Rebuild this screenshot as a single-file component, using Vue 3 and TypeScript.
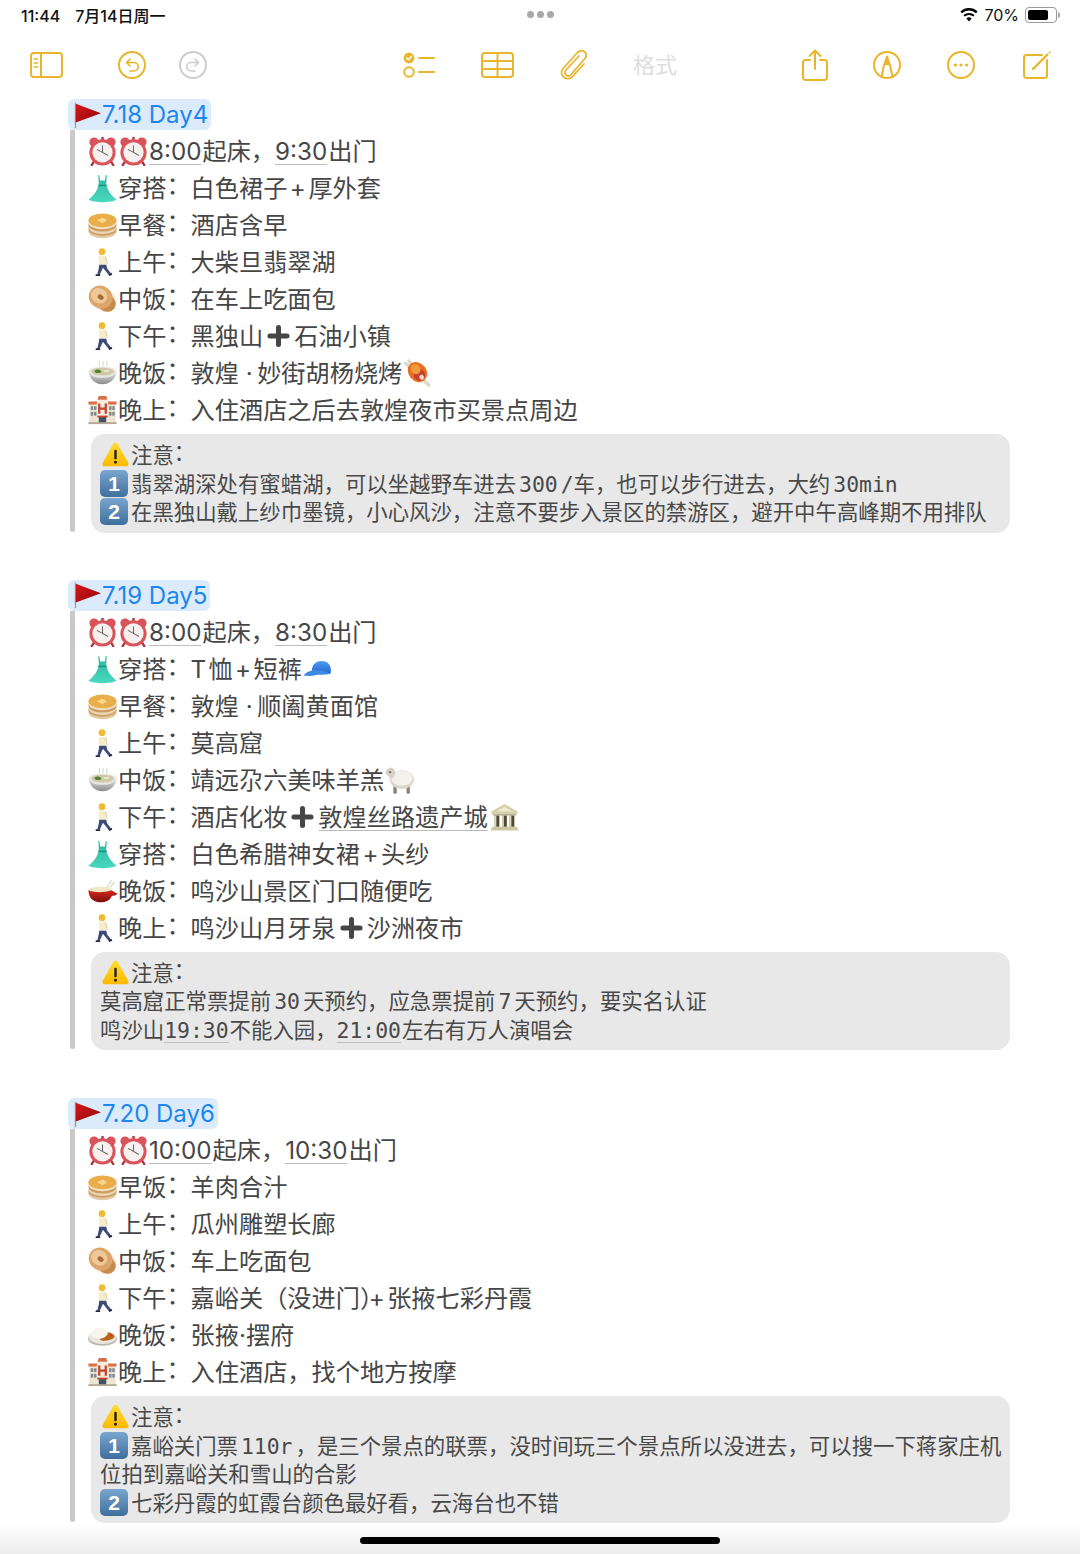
<script setup lang="ts">
type Seg = { k: 't' | 'u' | 'e' | 'c' | 'key' | 'm' | 'trim'; v: string }

const u = (v: string): Seg => ({ k: 'u', v })
const e = (v: string): Seg => ({ k: 'e', v })
const m = (v: string): Seg => ({ k: 'm', v })
const key = (v: string): Seg => ({ k: 'key', v })
const colon: Seg = { k: 'c', v: '：' }
const toSegs = (parts: (string | Seg)[]): Seg[] =>
  parts.map((p) => (typeof p === 'string' ? { k: 't', v: p } : p))

// icon + label + full-width colon + value
const row = (icon: string, label: string, ...value: (string | Seg)[]): Seg[] => [
  e(icon),
  { k: 't', v: label },
  colon,
  ...toSegs(value),
]

const days = [
  {
    title: '7.18 Day4',
    lines: [
      toSegs([e('clock'), e('clock'), u('8:00'), '起床，', u('9:30'), '出门']),
      row('dress', '穿搭', '白色裙子', m('+'), '厚外套'),
      row('pancake', '早餐', '酒店含早'),
      row('walk', '上午', '大柴旦翡翠湖'),
      row('bagel', '中饭', '在车上吃面包'),
      row('walk', '下午', '黑独山', e('plus'), '石油小镇'),
      row('bowl', '晚饭', '敦煌 ·\u2009妙街胡杨烧烤', e('meat')),
      row('hotel', '晚上', '入住酒店之后去敦煌夜市买景点周边'),
    ],
    notes: [
      toSegs([e('warn'), '注意', colon]),
      toSegs([key('1'), '翡翠湖深处有蜜蜡湖，可以坐越野车进去', m('300'), '/车，也可以步行进去，大约', m('30min')]),
      toSegs([key('2'), '在黑独山戴上纱巾墨镜，小心风沙，注意不要步入景区的禁游区，避开中午高峰期不用排队']),
    ],
  },
  {
    title: '7.19 Day5',
    lines: [
      toSegs([e('clock'), e('clock'), u('8:00'), '起床，', u('8:30'), '出门']),
      row('dress', '穿搭', 'T\u200a恤', m('+'), '短裤', e('cap')),
      row('pancake', '早餐', '敦煌 ·\u2009顺阖黄面馆'),
      row('walk', '上午', '莫高窟'),
      row('bowl', '中饭', '靖远尕六美味羊羔', e('sheep')),
      row('walk', '下午', '酒店化妆', e('plus'), u('敦煌丝路遗产城'), e('temple')),
      row('dress', '穿搭', '白色希腊神女裙', m('+'), '头纱'),
      row('pot', '晚饭', '鸣沙山景区门口随便吃'),
      row('walk', '晚上', '鸣沙山月牙泉', e('plus'), '沙洲夜市'),
    ],
    notes: [
      toSegs([e('warn'), '注意', colon]),
      toSegs(['莫高窟正常票提前', m('30'), '天预约，应急票提前', m('7'), '天预约，要实名认证']),
      toSegs(['鸣沙山', u('19:30'), '不能入园，', u('21:00'), '左右有万人演唱会']),
    ],
  },
  {
    title: '7.20 Day6',
    lines: [
      toSegs([e('clock'), e('clock'), u('10:00'), '起床，', u('10:30'), '出门']),
      row('pancake', '早饭', '羊肉合汁'),
      row('walk', '上午', '瓜州雕塑长廊'),
      row('bagel', '中饭', '车上吃面包'),
      row('walk', '下午', '嘉峪关（没进门', { k: 'trim', v: '）' }, m('+'), '张掖七彩丹霞'),
      row('curry', '晚饭', '张掖·摆府'),
      row('hotel', '晚上', '入住酒店，找个地方按摩'),
    ],
    notes: [
      toSegs([e('warn'), '注意', colon]),
      toSegs([key('1'), '嘉峪关门票', m('110r'), '，是三个景点的联票，没时间玩三个景点所以没进去，可以搜一下蒋家庄机位拍到嘉峪关和雪山的合影']),
      toSegs([key('2'), '七彩丹霞的虹霞台颜色最好看，云海台也不错']),
    ],
  },
]
</script>

<template>
  <div class="page">
    <!-- emoji sheet, referenced with <use> -->
    <svg class="sheet" aria-hidden="true">
      <defs>
        <linearGradient id="gFlag" x1="0" y1="0" x2="1" y2="1">
          <stop offset="0" stop-color="#d8161a" />
          <stop offset="1" stop-color="#8f0b0e" />
        </linearGradient>
        <linearGradient id="gDress" x1="0" y1="0" x2="0" y2="1">
          <stop offset="0" stop-color="#2bb5a0" />
          <stop offset="1" stop-color="#4ad8c0" />
        </linearGradient>
        <linearGradient id="gBowl" x1="0" y1="0" x2="0" y2="1">
          <stop offset="0" stop-color="#dcdcdc" />
          <stop offset="1" stop-color="#8c8c8c" />
        </linearGradient>
        <linearGradient id="gPot" x1="0" y1="0" x2="0" y2="1">
          <stop offset="0" stop-color="#d8281e" />
          <stop offset="1" stop-color="#7c0f0c" />
        </linearGradient>
        <linearGradient id="gCap" x1="0" y1="0" x2="0" y2="1">
          <stop offset="0" stop-color="#4c9cf0" />
          <stop offset="1" stop-color="#2468d0" />
        </linearGradient>
        <linearGradient id="gWarn" x1="0" y1="0" x2="0" y2="1">
          <stop offset="0" stop-color="#ffdd33" />
          <stop offset="1" stop-color="#fdb900" />
        </linearGradient>
      </defs>

      <symbol id="flag" viewBox="0 0 32 32">
        <rect x="3" y="3" width="1.4" height="27" fill="#9a9a9a" />
        <path d="M4 4 L31 14 L4 24 Z" fill="url(#gFlag)" />
      </symbol>

      <symbol id="clock" viewBox="0 0 32 32">
        <circle cx="7" cy="6.5" r="5" fill="#d8535a" />
        <circle cx="25" cy="6.5" r="5" fill="#d8535a" />
        <path d="M7 27 L4.5 31 M25 27 L27.5 31" stroke="#a8323a" stroke-width="2.4" stroke-linecap="round" />
        <rect x="14.6" y="1" width="2.8" height="4" fill="#b5494f" />
        <circle cx="16" cy="17.5" r="14" fill="#d9545b" />
        <circle cx="16" cy="17.5" r="10.8" fill="#f6f1ee" />
        <path d="M16 10.5 V17.5 L21.5 20.5 M16 17.5 L10.5 14.5" stroke="#6a6a6a" stroke-width="1.1" fill="none" stroke-linecap="round" />
      </symbol>

      <symbol id="dress" viewBox="0 0 32 32">
        <path d="M12.5 2 L13.5 8 L18.5 8 L19.5 2 L20.5 2 L20 10 L20.5 14 C22 20 27 25 31 28.5 C25 32 7 32 1 28.5 C5 25 10 20 11.5 14 L12 10 L11.5 2 Z" fill="url(#gDress)" />
        <rect x="11.6" y="12.6" width="8.8" height="1.4" fill="#1b8f7d" />
      </symbol>

      <symbol id="pancake" viewBox="0 0 32 32">
        <ellipse cx="16" cy="23" rx="15" ry="7" fill="#e3c9a2" />
        <ellipse cx="16" cy="20.5" rx="15" ry="7" fill="#c99d63" />
        <ellipse cx="16" cy="18.5" rx="15" ry="7" fill="#ecd8b6" />
        <ellipse cx="16" cy="16" rx="15" ry="7" fill="#cc9d5e" />
        <ellipse cx="16" cy="13.5" rx="15" ry="7" fill="#f0dfc2" />
        <ellipse cx="16" cy="11" rx="15" ry="7.4" fill="#e9ad4a" />
        <path d="M10 11 L16 8 L21 11 L16 14 Z" fill="#f7d88a" />
      </symbol>

      <symbol id="walk" viewBox="0 0 32 32">
        <circle cx="15.5" cy="5" r="3.6" fill="#f0bb34" />
        <path d="M11.5 9.5 H18.5 L20 19 H12.5 Z" fill="#f3eccd" />
        <path d="M18.5 10 L20.5 18 L21.5 18 L20 10 Z" fill="#e8c99a" />
        <path d="M12.5 19 H20 L21 23 L25 28 L22.5 29.5 L18 24 L16.5 22 L13 29.5 L10.5 29 L12 23 Z" fill="#3d4b78" />
        <path d="M9 29 H13.5 V31 H8.5 Z M22.5 29 L25.5 27.5 L26.5 29.5 L23 31 Z" fill="#23263c" />
      </symbol>

      <symbol id="bagel" viewBox="0 0 32 32">
        <ellipse cx="18.5" cy="18" rx="13" ry="11.5" fill="#f1e9da" transform="rotate(35 18.5 18)" />
        <ellipse cx="20" cy="20" rx="10.5" ry="9" fill="#c78c4c" transform="rotate(35 20 20)" />
        <ellipse cx="14" cy="14" rx="13" ry="12" fill="#dca66a" transform="rotate(35 14 14)" />
        <ellipse cx="12.5" cy="12.5" rx="9" ry="8" fill="#eec898" transform="rotate(35 12.5 12.5)" />
        <ellipse cx="14" cy="14" rx="3.4" ry="2.6" fill="#a86c34" transform="rotate(35 14 14)" />
      </symbol>

      <symbol id="bowl" viewBox="0 0 32 32">
        <path d="M13 9 C11 7 14 6 12.5 3 M17 9 C15 7 18 6 16.5 3 M21 9 C19 7 22 6 20.5 3" stroke="#cfcfcf" stroke-width="1" fill="none" />
        <ellipse cx="16" cy="15" rx="15" ry="6" fill="#e6e6e2" />
        <ellipse cx="16" cy="14.5" rx="12" ry="4.2" fill="#cfc9a8" />
        <path d="M7 14 C10 11 14 12 15 15 C12 17 9 16 7 14 Z" fill="#4e7f32" />
        <path d="M17 13 H24 L22 15 H18 Z" fill="#f1ead0" />
        <path d="M1 15.5 C3 22 7 28 16 28 C25 28 29 22 31 15.5 C27 20 22 21 16 21 C10 21 5 20 1 15.5 Z" fill="url(#gBowl)" />
      </symbol>

      <symbol id="meat" viewBox="0 0 32 32">
        <path d="M7 3 L11 9 M3 5.5 L8 9" stroke="#dfd7ca" stroke-width="3.2" stroke-linecap="round" />
        <path d="M21 22 L28 29" stroke="#dfd8cc" stroke-width="3.8" stroke-linecap="round" />
        <ellipse cx="16" cy="15" rx="9.5" ry="11.5" fill="#e5701f" transform="rotate(-40 16 15)" />
        <ellipse cx="18" cy="18" rx="6" ry="6.5" fill="#c5402c" transform="rotate(-40 18 18)" />
        <ellipse cx="14" cy="12" rx="5" ry="5.5" fill="#f19a3c" transform="rotate(-40 14 12)" />
        <ellipse cx="20.5" cy="20.5" rx="2.4" ry="2.8" fill="#f3d3c6" transform="rotate(-40 20.5 20.5)" />
      </symbol>

      <symbol id="hotel" viewBox="0 0 32 32">
        <path d="M2 10 L10 6 H22 L30 10 V30 H2 Z" fill="#efe3d2" />
        <path d="M1 7 H10 L12 1 H20 L22 7 H31 V10 H1 Z" fill="#d86f4a" />
        <rect x="10" y="5" width="12" height="25" fill="#f6ecdd" />
        <path d="M12.5 9 V20 M19.5 9 V20 M12.5 14.5 H19.5" stroke="#c2452f" stroke-width="2.4" fill="none" />
        <g fill="#7d8a93">
          <rect x="3.5" y="12" width="2.6" height="4" /><rect x="7" y="12" width="2.6" height="4" />
          <rect x="3.5" y="18" width="2.6" height="4" /><rect x="7" y="18" width="2.6" height="4" />
          <rect x="23" y="12" width="2.6" height="4" /><rect x="26.4" y="12" width="2.6" height="4" />
          <rect x="23" y="18" width="2.6" height="4" /><rect x="26.4" y="18" width="2.6" height="4" />
        </g>
        <rect x="12" y="23" width="8" height="7" fill="#3f5566" />
        <rect x="10.5" y="22" width="11" height="2" fill="#c2452f" />
        <rect x="1" y="29" width="30" height="2" fill="#b4a994" />
      </symbol>

      <symbol id="plus" viewBox="0 0 32 32">
        <path d="M16 6.9 V25.1 M6.9 16 H25.1" stroke="#464646" stroke-width="5.4" stroke-linecap="round" />
      </symbol>

      <symbol id="cap" viewBox="0 0 32 32">
        <path d="M10 18 C10 9 18 6 24 8 C30 10 31 16 30 21 C24 20 16 19 10 18 Z" fill="url(#gCap)" />
        <path d="M12 17 C7 18 3 20 1 23 C6 24 11 23 16 22 C21 22 27 22 30 21 C24 18 18 17 12 17 Z" fill="#3e8ae6" />
      </symbol>

      <symbol id="sheep" viewBox="0 0 32 32">
        <path d="M10 22 V30 H12.5 V22 M24 22 V30 H26.5 V22" fill="#8a8274" stroke="#8a8274" />
        <ellipse cx="18.5" cy="15.5" rx="13" ry="10" fill="#dcd7cc" />
        <ellipse cx="18.5" cy="14" rx="11.5" ry="8" fill="#f4f1ea" />
        <path d="M1 8 C2 4 6 2 9 3.5 C12 5 12 10 10 13 C8 15 6 15 5 13 C4 12 2 10 1 8 Z" fill="#d8d2c4" />
        <circle cx="6" cy="7.6" r=".9" fill="#333" />
      </symbol>

      <symbol id="temple" viewBox="0 0 32 32">
        <path d="M16 2 L30 10 V12.5 H2 V10 Z" fill="#d8cfae" />
        <path d="M16 5 L24.5 10 H7.5 Z" fill="#efe9d2" />
        <rect x="3.5" y="12.5" width="25" height="2" fill="#bdb391" />
        <g fill="#4f4936">
          <rect x="5.5" y="14.5" width="5" height="12" /><rect x="13.5" y="14.5" width="5" height="12" /><rect x="21.5" y="14.5" width="5" height="12" />
        </g>
        <g fill="#e4dcc0">
          <rect x="5.5" y="14.5" width="1.8" height="12" /><rect x="13.5" y="14.5" width="1.8" height="12" /><rect x="21.5" y="14.5" width="1.8" height="12" />
        </g>
        <path d="M3 26.5 H29 L31 30.5 H1 Z" fill="#cfc6a4" />
      </symbol>

      <symbol id="pot" viewBox="0 0 32 32">
        <path d="M19 15 L26 4 M22 15 L29 6" stroke="#dcd6c8" stroke-width="1.3" />
        <ellipse cx="13" cy="15" rx="12" ry="3.6" fill="#f1e6c6" />
        <path d="M1 15 C4 18 22 18 25 15 L32 19 C30 21 28 21.5 26 21 C24 26 20 28 13 28 C6 28 1 23 1 15 Z" fill="url(#gPot)" />
      </symbol>

      <symbol id="curry" viewBox="0 0 32 32">
        <ellipse cx="16" cy="20" rx="15.5" ry="7.5" fill="#b9b6ad" />
        <ellipse cx="16" cy="18.5" rx="15" ry="7" fill="#e9e6dd" />
        <path d="M17 14 C22 12 28 14 29 18 C26 22 17 23 13 21 Z" fill="#b8651f" />
        <path d="M3 16 C4 9 14 7 21 10 C23 14 21 18 14 20 C9 20 5 19 3 16 Z" fill="#f8f5ec" />
        <circle cx="25" cy="16" r="1.3" fill="#d23c20" />
      </symbol>

      <symbol id="warn" viewBox="0 0 32 32">
        <path d="M16 3 C17 3 18 3.6 18.6 4.6 L30.6 26 C31.6 27.8 30.6 30 28.4 30 H3.6 C1.4 30 .4 27.8 1.4 26 L13.4 4.6 C14 3.6 15 3 16 3 Z" fill="url(#gWarn)" />
        <rect x="14.6" y="11" width="2.8" height="11" rx="1.2" fill="#222" />
        <circle cx="16" cy="25.4" r="1.7" fill="#222" />
      </symbol>
    </svg>

    <header class="status">
      <div class="status-left"><span>11:44</span><span class="status-date">7月14日周一</span></div>
      <div class="dots"><i /><i /><i /></div>
      <div class="status-right">
        <svg class="wifi" viewBox="0 0 18 14" aria-hidden="true">
          <path d="M9 13.5 L6.4 10.4 A4 4 0 0 1 11.6 10.4 Z" />
          <path d="M4.7 8.5 A6.6 6.6 0 0 1 13.3 8.5 L14.6 7 A8.6 8.6 0 0 0 3.4 7 Z" />
          <path d="M2 5.3 A10.4 10.4 0 0 1 16 5.3 L17.6 3.5 A12.6 12.6 0 0 0 .4 3.5 Z" />
        </svg>
        <span class="pct">70%</span>
        <span class="battery"><b /></span>
      </div>
    </header>

    <nav class="toolbar">
      <svg class="tb sidebar" viewBox="0 0 33 26" aria-hidden="true">
        <rect x="1" y="1" width="31" height="24" rx="3" />
        <path d="M11 1 V25" />
        <path d="M4 7 H7.5 M4 11 H7.5 M4 15 H7.5" stroke-width="1.4" />
      </svg>
      <svg class="tb undo" viewBox="0 0 28 28" aria-hidden="true">
        <circle cx="14" cy="14" r="13" />
        <path d="M12 8 L8.5 11.5 L12 15 M8.5 11.5 H16 A4.2 4.2 0 0 1 16 20 H12" stroke-width="1.7" />
      </svg>
      <svg class="tb redo off" viewBox="0 0 28 28" aria-hidden="true">
        <circle cx="14" cy="14" r="13" />
        <path d="M16 8 L19.5 11.5 L16 15 M19.5 11.5 H12 A4.2 4.2 0 0 0 12 20 H16" stroke-width="1.7" />
      </svg>
      <svg class="tb check" viewBox="0 0 32 28" aria-hidden="true">
        <circle cx="6" cy="7" r="5.4" fill="#e8b52d" stroke="none" />
        <path d="M3.6 7 L5.4 8.8 L8.6 5.2" stroke="#fff" stroke-width="1.5" />
        <circle cx="6" cy="21" r="4.8" />
        <path d="M16 7 H31 M16 21 H31" />
      </svg>
      <svg class="tb table" viewBox="0 0 33 26" aria-hidden="true">
        <rect x="1" y="1" width="31" height="24" rx="3" />
        <path d="M1 9 H32 M1 17 H32 M16.5 1 V25" />
      </svg>
      <svg class="tb clip" viewBox="0 0 28 31" aria-hidden="true">
        <path d="M19 7 L6 21 C3 25 8 29 11 25.5 L25 9.5 C29 4 22 -1 17.5 3.5 L3 19.5 C-2 26 7 34 13 27 L24 15" stroke-width="1.8" />
      </svg>
      <span class="fmt">格式</span>
      <svg class="tb share" viewBox="0 0 26 32" aria-hidden="true">
        <path d="M8 11 H3.5 A2.5 2.5 0 0 0 1 13.5 V28.5 A2.5 2.5 0 0 0 3.5 31 H22.5 A2.5 2.5 0 0 0 25 28.5 V13.5 A2.5 2.5 0 0 0 22.5 11 H18" />
        <path d="M13 20 V1.5 M7.5 7 L13 1.5 L18.5 7" />
      </svg>
      <svg class="tb markup" viewBox="0 0 28 28" aria-hidden="true">
        <circle cx="14" cy="14" r="13" />
        <path d="M8.5 26 L10.8 15 L14 5.5 L17.2 15 L19.5 26" />
        <path d="M14 5.5 L11.6 14 H16.4 Z" fill="#e8b52d" stroke="none" />
      </svg>
      <svg class="tb more" viewBox="0 0 28 28" aria-hidden="true">
        <circle cx="14" cy="14" r="13" />
        <g fill="#e8b52d" stroke="none">
          <circle cx="8.4" cy="14" r="1.6" /><circle cx="14" cy="14" r="1.6" /><circle cx="19.6" cy="14" r="1.6" />
        </g>
      </svg>
      <svg class="tb compose" viewBox="0 0 28 28" aria-hidden="true">
        <path d="M19 4 H3.5 A2.5 2.5 0 0 0 1 6.5 V24.5 A2.5 2.5 0 0 0 3.5 27 H21.5 A2.5 2.5 0 0 0 24 24.5 V9" />
        <path d="M10 18 L24.5 3.5" stroke-width="2.4" />
        <circle cx="26.6" cy="1.6" r="1" fill="#e8b52d" stroke="none" />
      </svg>
    </nav>

    <main class="note">
      <section v-for="day in days" :key="day.title" class="day">
        <h2 class="heading">
          <svg class="flag"><use href="#flag" /></svg>{{ day.title }}
        </h2>
        <div class="body">
          <p v-for="(line, i) in day.lines" :key="i" class="line">
            <template v-for="(s, j) in line" :key="j">
              <svg v-if="s.k === 'e'" class="em" :class="s.v"><use :href="'#' + s.v" /></svg>
              <u v-else-if="s.k === 'u'" class="link">{{ s.v }}</u>
              <span v-else-if="s.k === 'c'" class="colon">{{ s.v }}</span>
              <span v-else-if="s.k === 'm'" class="mid">{{ s.v }}</span>
              <span v-else-if="s.k === 'trim'" class="trim">{{ s.v }}</span>
              <template v-else>{{ s.v }}</template>
            </template>
          </p>
          <div class="callout">
            <p v-for="(line, i) in day.notes" :key="i">
              <template v-for="(s, j) in line" :key="j">
                <svg v-if="s.k === 'e'" class="em-sm"><use :href="'#' + s.v" /></svg>
                <span v-else-if="s.k === 'key'" class="keycap">{{ s.v }}</span>
                <span v-else-if="s.k === 'c'" class="colon">{{ s.v }}</span>
                <span v-else-if="s.k === 'm'" class="mid">{{ s.v }}</span>
                <u v-else-if="s.k === 'u'" class="link">{{ s.v }}</u>
                <template v-else>{{ s.v }}</template>
              </template>
            </p>
          </div>
        </div>
      </section>
    </main>

    <div class="fade" />
    <div class="home" />
  </div>
</template>

<style>
html,
body {
  margin: 0;
  background: #fff;
}
</style>

<style scoped>
.page {
  position: relative;
  width: 1080px;
  height: 1554px;
  overflow: hidden;
  background: #fff;
  font-family: Inter, 'Noto Sans CJK SC', sans-serif;
  color: #464646;
}
.sheet {
  position: absolute;
  width: 0;
  height: 0;
}

.status {
  display: grid;
  grid-template-columns: 1fr auto 1fr;
  align-items: center;
  height: 29px;
  padding: 0 20px 0 21px;
  font-size: 16px;
  font-weight: 500;
  color: #111;
}
.status-date {
  margin-left: 15px;
}
.dots {
  display: flex;
  gap: 3px;
}
.dots i {
  width: 7px;
  height: 7px;
  border-radius: 50%;
  background: #a9a9a9;
}
.status-right {
  display: flex;
  align-items: center;
  justify-content: flex-end;
}
.wifi {
  width: 18px;
  height: 14px;
  fill: #000;
}
.pct {
  margin-left: 6px;
  font-weight: 400;
}
.battery {
  position: relative;
  box-sizing: border-box;
  width: 32px;
  height: 16px;
  margin: 0 3px 0 6px;
  padding: 2px;
  border: 1px solid #999;
  border-radius: 4px;
}
.battery b {
  display: block;
  width: 20px;
  height: 10px;
  border-radius: 2px;
  background: #000;
}
.battery::after {
  content: '';
  position: absolute;
  right: -4px;
  top: 4px;
  width: 2px;
  height: 6px;
  border-radius: 0 2px 2px 0;
  background: #aaa;
}

.toolbar {
  display: flex;
  align-items: center;
  height: 69px;
  padding: 1px 0 0 30px;
}
.tb {
  flex: none;
  fill: none;
  stroke: #e8b52d;
  stroke-width: 2;
  stroke-linecap: round;
  stroke-linejoin: round;
  overflow: visible;
}
.tb.off {
  stroke: #cdcdcd;
}
.sidebar { width: 33px; height: 26px; }
.undo { width: 28px; height: 28px; margin-left: 55px; }
.redo { width: 28px; height: 28px; margin-left: 33px; }
.check { width: 32px; height: 28px; margin-left: 196px; }
.table { width: 33px; height: 26px; margin-left: 46px; }
.clip { width: 28px; height: 31px; margin-left: 46px; }
.fmt {
  flex: none;
  width: 44px;
  margin-left: 45px;
  font-size: 22px;
  line-height: 28px;
  color: #dedede;
}
.share { width: 26px; height: 32px; margin-left: 125px; }
.markup { width: 28px; height: 28px; margin-left: 45px; }
.more { width: 28px; height: 28px; margin-left: 46px; }
.compose { width: 28px; height: 28px; margin-left: 48px; }

.note {
  padding-left: 68px;
}
.day + .day {
  margin-top: 47px;
}
.day:last-child {
  margin-top: 48px;
}
.heading {
  display: flex;
  align-items: center;
  width: max-content;
  height: 31px;
  margin: 0;
  padding-right: 3px;
  border-radius: 6px;
  background: #dcebfc;
  font-size: 24px;
  font-weight: 400;
  color: #1c86ee;
}
.flag {
  width: 30px;
  height: 30px;
  margin: 0 0 0 4px;
}
.body {
  position: relative;
  box-sizing: border-box;
  width: 942px;
  margin-left: 2px;
  padding: 3px 0 0 17px;
}
/* grey quote bar, ends one pixel above the callout bottom */
.body::before {
  content: '';
  position: absolute;
  left: 0;
  top: 0;
  bottom: 1px;
  width: 5px;
  border-radius: 0 0 3px 3px;
  background: #c9c9c9;
}
.line {
  height: 37px;
  margin: 0;
  font-size: 24.2px;
  line-height: 37px;
  white-space: nowrap;
}
.em {
  width: 31px;
  height: 30px;
  margin-block: -6px;
}
.colon {
  line-height: 0;
  vertical-align: 0.12em;
}
.mid {
  margin: 0 2.5px;
}
.trim {
  margin-right: -18px;
}
.link {
  padding-right: 1px;
  text-decoration: underline;
  text-decoration-color: #bdbdbd;
  text-decoration-thickness: 1px;
  text-underline-offset: 4px;
}
.callout {
  box-sizing: border-box;
  width: 919px;
  margin: 5px 0 0 4px;
  padding: 8px 5px 5px 9px;
  border-radius: 14px;
  background: #e8e8e8;
  font-family: 'DejaVu Sans Mono', 'Noto Sans CJK SC', monospace;
  font-size: 21.4px;
  line-height: 28.5px;
  color: #484848;
}
.callout p {
  margin: 0;
}
.callout .mid {
  margin: 0 3px;
}
.em-sm {
  width: 31px;
  height: 28px;
  margin-block: -5px;
}
.keycap {
  display: inline-block;
  width: 28px;
  height: 27px;
  margin: -6px 3px -6px 0;
  border-radius: 5px;
  background: linear-gradient(#7aa6cf, #3f6f9c);
  font: 700 21px/27px 'Liberation Sans', sans-serif;
  color: #fff;
  text-align: center;
  vertical-align: 1px;
}

.fade {
  position: absolute;
  left: 0;
  right: 0;
  bottom: 0;
  height: 30px;
  background: linear-gradient(rgba(236, 236, 236, 0), #ececec);
}
.home {
  position: absolute;
  left: 360px;
  bottom: 10px;
  width: 360px;
  height: 7px;
  border-radius: 4px;
  background: #000;
}
</style>
